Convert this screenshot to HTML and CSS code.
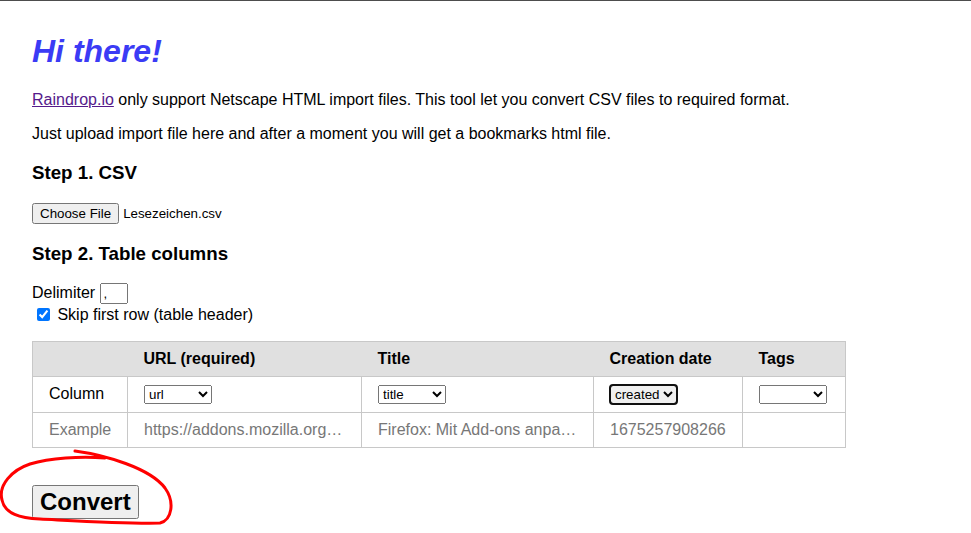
FILE: index.html
```html
<!DOCTYPE html>
<html lang="en">
<head>
<meta charset="utf-8">
<title>CSV to Netscape HTML</title>
<link rel="stylesheet" href="styles.css">
</head>
<body>
<main class="page">
  <h1 class="title">Hi there!</h1>
  <p class="text"><a class="link" href="#">Raindrop.io</a> only support Netscape HTML import files. This tool let you convert CSV files to required format.</p>
  <p class="text">Just upload import file here and after a moment you will get a bookmarks html file.</p>

  <h3 class="step">Step 1. CSV</h3>
  <div class="file-row">
    <button class="file-btn" type="button">Choose File</button><span class="file-name">Lesezeichen.csv</span>
  </div>

  <h3 class="step step-2">Step 2. Table columns</h3>
  <div class="option">Delimiter <input class="delim" type="text" value=","></div>
  <label class="option check"><input class="checkbox" type="checkbox" checked> Skip first row (table header)</label>

  <table class="columns">
    <colgroup>
      <col class="c1"><col class="c2"><col class="c3"><col class="c4"><col class="c5">
    </colgroup>
    <thead>
      <tr>
        <th></th>
        <th>URL (required)</th>
        <th>Title</th>
        <th>Creation date</th>
        <th>Tags</th>
      </tr>
    </thead>
    <tbody>
      <tr>
        <td class="label">Column</td>
        <td><select class="sel"><option>url</option></select></td>
        <td><select class="sel"><option>title</option></select></td>
        <td><select class="sel sel-focus"><option>created</option></select></td>
        <td><select class="sel"><option></option></select></td>
      </tr>
      <tr class="example">
        <td class="label">Example</td>
        <td class="clip">https://addons.mozilla.org/de/firefox/</td>
        <td class="clip">Firefox: Mit Add-ons anpassen</td>
        <td>1675257908266</td>
        <td></td>
      </tr>
    </tbody>
  </table>

  <div class="submit">
    <button class="convert" type="button">Convert</button>
  </div>

  <svg class="scribble" width="180" height="90" viewBox="0 440 180 90" aria-hidden="true">
    <path d="M 75 451 C 105 455, 150 468, 165 488 C 175 502, 172 520, 160 523 C 130 524, 80 521, 40 519 C 20 518, 5 514, 2 500 C -2 485, 12 470, 30 464 C 50 458, 80 456, 105 458"
      fill="none" stroke="#ff0000" stroke-width="3" stroke-linecap="round" stroke-linejoin="round"/>
  </svg>
</main>
</body>
</html>
```

FILE: styles.css
```css
html, body {
  margin: 0;
  padding: 0;
}

body {
  border-top: 1px solid #4d4d4d;
  font-family: "Liberation Sans", Arial, sans-serif;
  font-size: 16px;
  color: #000;
  background: #fff;
}

.page {
  position: relative;
  padding: 8px 32px 20px;
}

.title {
  margin: 24px 0 21px;
  font-size: 32px;
  font-weight: bold;
  font-style: italic;
  color: #3b3bf5;
}

.text {
  margin: 16px 0;
}

.link {
  color: #551a8b;
  text-decoration: underline;
}

.step {
  margin: 18.72px 0;
  font-size: 18.72px;
  font-weight: bold;
}

.step-2 {
  margin-bottom: 16.5px;
}

.file-row {
  display: flex;
  align-items: center;
  height: 22px;
}

.file-btn {
  font-family: "Liberation Sans", Arial, sans-serif;
  font-size: 13.33px;
  margin: 0 4px 0 0;
  padding: 1px 6px;
}

.file-name {
  font-size: 13.33px;
}

.option {
  display: block;
  line-height: 22px;
}

.delim {
  width: 20px;
  font-family: "Liberation Sans", Arial, sans-serif;
  font-size: 13.33px;
  padding: 1px 2px;
  margin: 0;
}

.checkbox {
  margin: 3px 3px 3px 5px;
  vertical-align: -1px;
}

.columns {
  margin-top: 15px;
  width: 813px;
  table-layout: fixed;
  border-collapse: collapse;
  border: 1px solid #c8c8c8;
}

.c1 { width: 95px; }
.c2 { width: 234px; }
.c3 { width: 232px; }
.c4 { width: 149px; }
.c5 { width: 103px; }

.columns th {
  background: #e0e0e0;
  text-align: left;
  font-weight: bold;
  padding: 8px 16px;
  height: 16px;
}

.columns td {
  padding: 8px 16px;
  border: 1px solid #c8c8c8;
  white-space: nowrap;
  height: 18px;
}

.columns td.clip {
  overflow: hidden;
  text-overflow: ellipsis;
}

.example td {
  color: #777;
}

.sel {
  width: 68px;
  height: 19px;
  font-family: "Liberation Sans", Arial, sans-serif;
  font-size: 13.33px;
  vertical-align: middle;
}

.sel-focus {
  width: 67px;
  outline: 2px solid #101010;
  outline-offset: -1px;
  border-radius: 3px;
}

.submit {
  margin-top: 37px;
}

.convert {
  font-family: "Liberation Sans", Arial, sans-serif;
  font-size: 24px;
  font-weight: bold;
  padding: 1px 6px;
  margin: 0;
}

.scribble {
  position: absolute;
  left: 0;
  top: 439px;
  overflow: visible;
}
```
